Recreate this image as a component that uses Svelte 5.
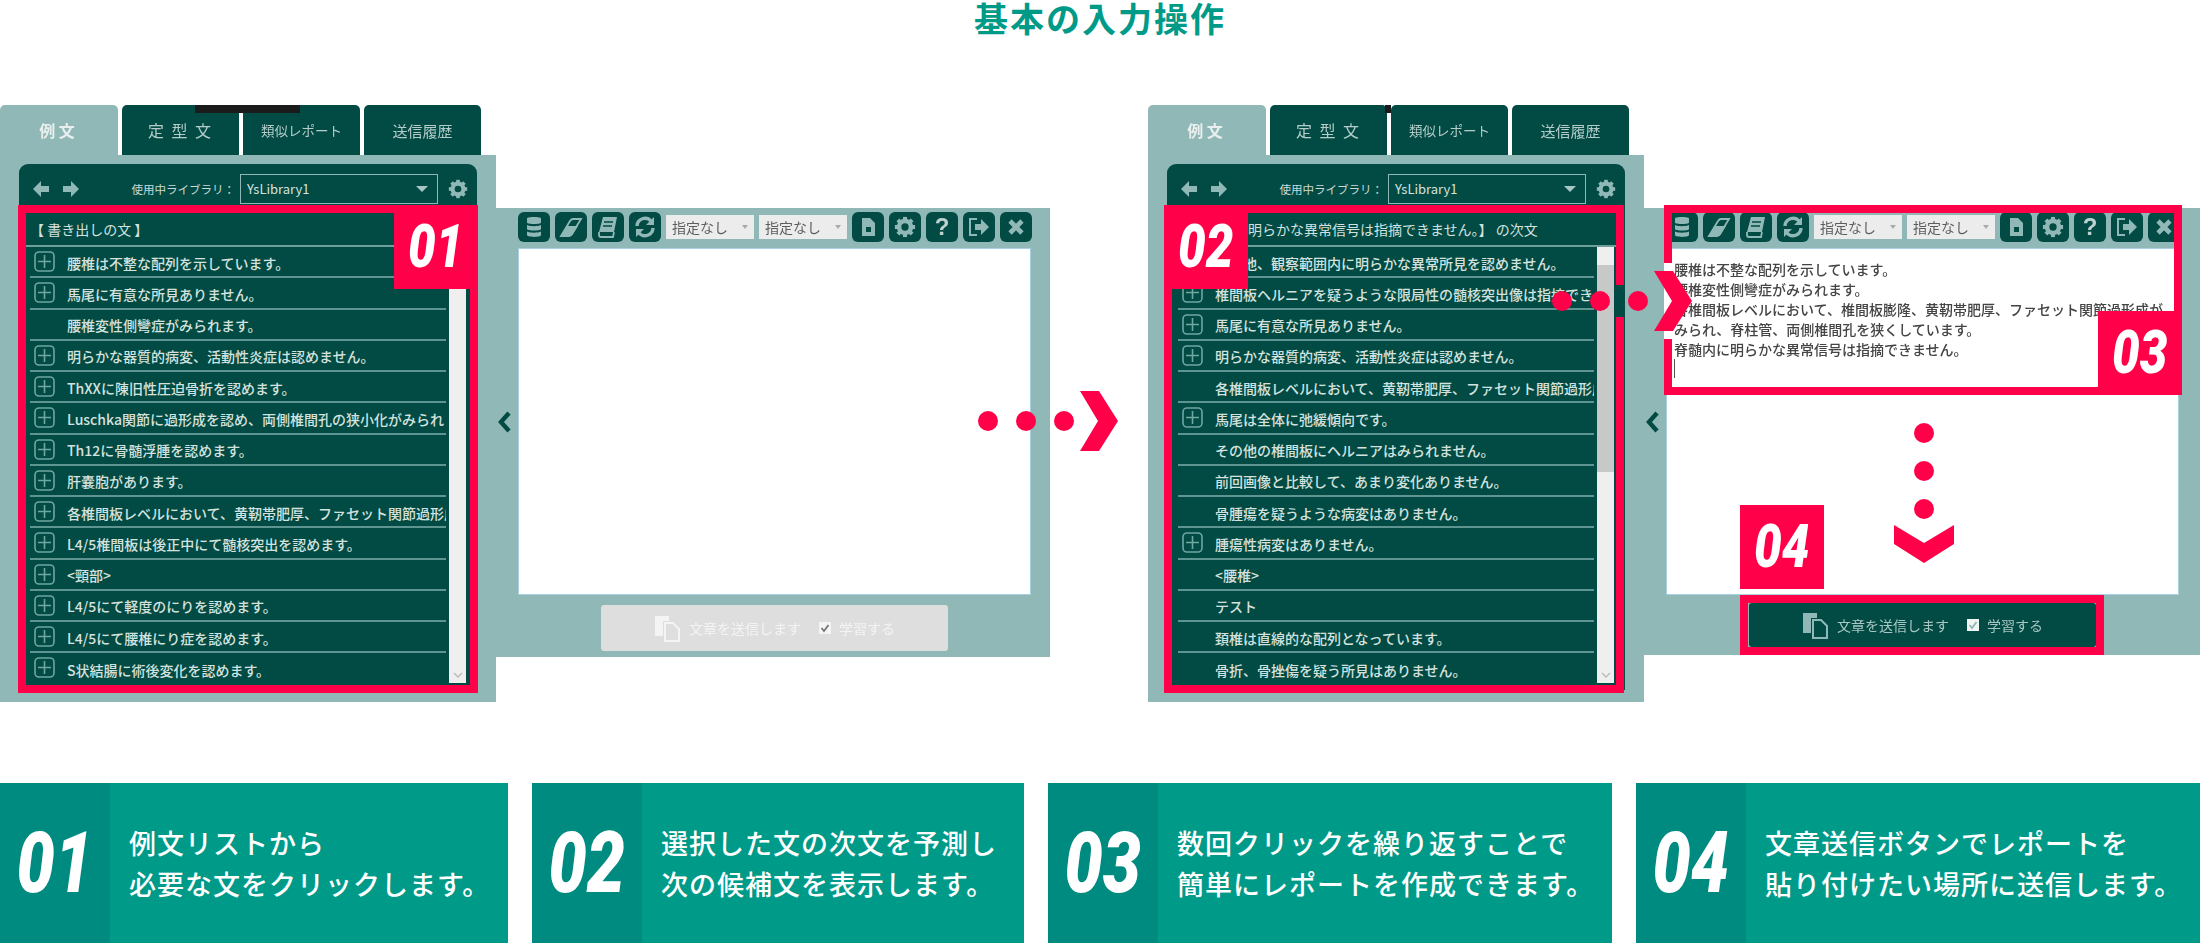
<script lang="ts">
	const firstRows = [
		{ text: '腰椎は不整な配列を示しています。', plus: true },
		{ text: '馬尾に有意な所見ありません。', plus: true },
		{ text: '腰椎変性側彎症がみられます。', plus: false },
		{ text: '明らかな器質的病変、活動性炎症は認めません。', plus: true },
		{ text: 'ThXXに陳旧性圧迫骨折を認めます。', plus: true },
		{ text: 'Luschka関節に過形成を認め、両側椎間孔の狭小化がみられます。', plus: true },
		{ text: 'Th12に骨髄浮腫を認めます。', plus: true },
		{ text: '肝嚢胞があります。', plus: true },
		{ text: '各椎間板レベルにおいて、黄靭帯肥厚、ファセット関節過形成がみられます。', plus: true },
		{ text: 'L4/5椎間板は後正中にて髄核突出を認めます。', plus: true },
		{ text: '<頸部>', plus: true },
		{ text: 'L4/5にて軽度のにりを認めます。', plus: true },
		{ text: 'L4/5にて腰椎にり症を認めます。', plus: true },
		{ text: 'S状結腸に術後変化を認めます。', plus: true }
	];

	const nextRows = [
		{ text: 'その他、観察範囲内に明らかな異常所見を認めません。', plus: false },
		{ text: '椎間板ヘルニアを疑うような限局性の髄核突出像は指摘できません。', plus: true },
		{ text: '馬尾に有意な所見ありません。', plus: true },
		{ text: '明らかな器質的病変、活動性炎症は認めません。', plus: true },
		{ text: '各椎間板レベルにおいて、黄靭帯肥厚、ファセット関節過形成がみられます。', plus: false },
		{ text: '馬尾は全体に弛緩傾向です。', plus: true },
		{ text: 'その他の椎間板にヘルニアはみられません。', plus: false },
		{ text: '前回画像と比較して、あまり変化ありません。', plus: false },
		{ text: '骨腫瘍を疑うような病変はありません。', plus: false },
		{ text: '腫瘍性病変はありません。', plus: true },
		{ text: '<腰椎>', plus: false },
		{ text: 'テスト', plus: false },
		{ text: '頚椎は直線的な配列となっています。', plus: false },
		{ text: '骨折、骨挫傷を疑う所見はありません。', plus: false }
	];

	const reportLines = [
		'腰椎は不整な配列を示しています。',
		'腰椎変性側彎症がみられます。',
		'各椎間板レベルにおいて、椎間板膨隆、黄靭帯肥厚、ファセット関節過形成が',
		'みられ、脊柱管、両側椎間孔を狭くしています。',
		'脊髄内に明らかな異常信号は指摘できません。'
	];

	const cards = [
		{ no: '01', lines: ['例文リストから', '必要な文をクリックします。'] },
		{ no: '02', lines: ['選択した文の次文を予測し', '次の候補文を表示します。'] },
		{ no: '03', lines: ['数回クリックを繰り返すことで', '簡単にレポートを作成できます。'] },
		{ no: '04', lines: ['文章送信ボタンでレポートを', '貼り付けたい場所に送信します。'] }
	];

	const teeth = [0, 45, 90, 135, 180, 225, 270, 315];
</script>

{#snippet gear(size)}
	<svg class="gear" width={size} height={size} viewBox="0 0 24 24">
		<circle cx="12" cy="12" r="6.5" fill="none" stroke="currentColor" stroke-width="5" />
		{#each teeth as angle}
			<rect x="9.8" y="1" width="4.4" height="5" fill="currentColor" transform="rotate({angle} 12 12)" />
		{/each}
	</svg>
{/snippet}

{#snippet library(rows, title, thumb, notch)}
	<div class="library">
		<div class="tabs">
			<div class="tab active">例 文</div>
			<div class="tab spaced">定 型 文</div>
			<div class="tab small">類似レポート</div>
			<div class="tab">送信履歴</div>
			<div class="tab-notch {notch}"></div>
		</div>
		<div class="library-body">
			<div class="library-panel">
				<div class="library-bar">
					<svg width="18" height="18" viewBox="0 0 18 18"><path d="M9 1 1 9l8 8 0-5h8V6H9z" fill="currentColor" /></svg>
					<svg width="18" height="18" viewBox="0 0 18 18"><path d="M9 1l8 8-8 8 0-5H1V6h8z" fill="currentColor" /></svg>
					<span class="library-label">使用中ライブラリ：</span>
					<div class="library-select">
						<span>YsLibrary1</span>
						<i class="caret"></i>
					</div>
					{@render gear(20)}
				</div>
				<div class="list-title">{title}</div>
				<div class="list">
					<div class="rows">
						{#each rows as row}
							<div class="row">
								{#if row.plus}
									<svg class="plus" width="21" height="21" viewBox="0 0 21 21">
										<rect x="1" y="1" width="19" height="19" rx="4" fill="none" stroke="currentColor" stroke-width="1.6" />
										<path d="M10.5 4v13M4 10.5h13" stroke="currentColor" stroke-width="1.6" />
									</svg>
								{/if}
								<span class="row-text">{row.text}</span>
							</div>
						{/each}
					</div>
					<div class="scrollbar">
						{#if thumb}<div class="scroll-up"></div><div class="thumb"></div>{/if}
						<svg class="scroll-down" width="10" height="6" viewBox="0 0 10 6"><path d="M1 1l4 4 4-4" fill="none" stroke="#bbb" stroke-width="1.4" /></svg>
					</div>
				</div>
			</div>
		</div>
	</div>
{/snippet}

{#snippet editor(lines, ready)}
	<div class="editor" class:ready>
		<div class="collapse">
			<svg width="15" height="22" viewBox="0 0 15 22"><path d="M12 2 4 11l8 9" fill="none" stroke="#024a44" stroke-width="4.4" /></svg>
		</div>
		<div class="editor-main">
			<div class="toolbar">
				<button class="tool" aria-label="ライブラリ">
					<svg width="20" height="24" viewBox="0 0 20 24"><path d="M3 3.5C3 1.500 17 1.500 17 3.500v4C17 9.500 3 9.500 3 7.500zM3 10c3 1.600 11 1.600 14 0v4c0 2-14 2-14 0zM3 16.500c3 1.600 11 1.600 14 0V20c0 2.500-14 2.500-14 0z" fill="currentColor" /></svg>
				</button>
				<button class="tool" aria-label="消去">
					<svg width="24" height="22" viewBox="0 0 24 22"><path d="M2 20 11 5c1-1.500 2-2 3-2h8l-9 15c-.6 1-1.500 2-3 2z" fill="none" stroke="currentColor" stroke-width="1.800" /><path d="M8 10h11l-5 8c-.6 1-1.500 2-3 2H2z" fill="currentColor" /></svg>
				</button>
				<button class="tool" aria-label="辞書">
					<svg width="24" height="24" viewBox="0 0 24 24"><path d="M7 2h14l-3 15H3z" fill="currentColor" /><path d="M3 17v3c0 1 .5 2 2 2h12l1-5" fill="none" stroke="currentColor" stroke-width="1.800" /><path d="M8 7h9M7 11h9" stroke="#024a44" stroke-width="1.500" /></svg>
				</button>
				<button class="tool" aria-label="更新">
					<svg width="24" height="24" viewBox="0 0 24 24"><path d="M4 11a8 8 0 0 1 14-5" fill="none" stroke="currentColor" stroke-width="3.400" /><path d="M21 2v8h-8z" fill="currentColor" /><path d="M20 13a8 8 0 0 1-14 5" fill="none" stroke="currentColor" stroke-width="3.400" /><path d="M3 22v-8h8z" fill="currentColor" /></svg>
				</button>
				<div class="picker"><span>指定なし</span><i class="caret grey"></i></div>
				<div class="picker"><span>指定なし</span><i class="caret grey"></i></div>
				<button class="tool" aria-label="文書">
					<svg width="18" height="20" viewBox="0 0 18 20"><path d="M3 1h8l5 5v13H3zM7 10v5h5v-5z" fill="currentColor" fill-rule="evenodd" /></svg>
				</button>
				<button class="tool" aria-label="設定">{@render gear(22)}</button>
				<button class="tool question">?</button>
				<button class="tool" aria-label="戻る">
					<svg width="24" height="22" viewBox="0 0 24 22"><path d="M10 3H3v16h7" fill="none" stroke="currentColor" stroke-width="2" /><path d="M8 8h6V3l8 8-8 8v-5H8z" fill="currentColor" /></svg>
				</button>
				<button class="tool" aria-label="閉じる">
					<svg width="18" height="18" viewBox="0 0 18 18"><path d="M3 3l12 12M15 3 3 15" stroke="currentColor" stroke-width="4.600" /></svg>
				</button>
			</div>
			<div class="report">
				{#each lines as line}
					<div>{line}</div>
				{/each}
				{#if lines.length}<div class="cursor"></div>{/if}
			</div>
			<div class="send">
				<svg width="27" height="27" viewBox="0 0 27 27"><path d="M1 1h14v5H9v15H1z" fill="currentColor" /><path d="M11 8h8l6 6v12H11z" fill="none" stroke="currentColor" stroke-width="2" /></svg>
				<span class="send-label">文章を送信します</span>
				<span class="check">
					<svg width="10" height="10" viewBox="0 0 10 10"><path d="M1.500 5l2.500 3 4.500-6" fill="none" stroke="currentColor" stroke-width="1.800" /></svg>
				</span>
				<span>学習する</span>
			</div>
		</div>
	</div>
{/snippet}

<main class="page">
	<h1 class="heading">基本の入力操作</h1>

	<section class="demo">
		<div class="shot">
			{@render library(firstRows, '【 書き出しの文 】', false, 'wide')}
			{@render editor([], false)}

			<div class="frame frame-01">
				<div class="badge badge-01"><span>01</span></div>
			</div>

			<div class="arrow arrow-01">
				<i class="dot"></i><i class="dot"></i><i class="dot"></i>
				<svg width="38" height="60" viewBox="0 0 38 60"><path d="M0 0h19l19 30-19 30H0l18-30z" fill="#ff0049" /></svg>
			</div>
		</div>

		<div class="shot shot-next">
			{@render library(nextRows, '【脊髄内に明らかな異常信号は指摘できません。】 の次文', true, 'thin')}
			{@render editor(reportLines, true)}

			<div class="frame frame-02">
				<div class="badge badge-02"><span>02</span></div>
				<div class="gap-02"></div>
			</div>
			<div class="frame frame-03">
				<div class="badge badge-03"><span>03</span></div>
				<div class="gap-03"></div>
			</div>
			<div class="frame frame-04">
				<div class="badge badge-04"><span>04</span></div>
			</div>

			<div class="arrow arrow-02">
				<i class="dot"></i><i class="dot"></i><i class="dot"></i>
				<svg width="38" height="60" viewBox="0 0 38 60"><path d="M0 0h19l19 30-19 30H0l18-30z" fill="#ff0049" /></svg>
			</div>
			<div class="arrow arrow-03">
				<i class="dot"></i><i class="dot"></i><i class="dot"></i>
				<svg width="60" height="38" viewBox="0 0 60 38"><path d="M0 0 30 18 60 0v19L30 38 0 19z" fill="#ff0049" /></svg>
			</div>
		</div>
	</section>

	<section class="cards">
		{#each cards as card}
			<article class="card">
				<div class="card-no"><span>{card.no}</span></div>
				<p class="card-text">
					{#each card.lines as line}
						<span>{line}</span>
					{/each}
				</p>
			</article>
		{/each}
	</section>
</main>

<style>
	:global(body) {
		margin: 0;
		background: #fff;
	}
	.page {
		width: 2200px;
		height: 943px;
		overflow: hidden;
		font-family: 'Noto Sans CJK JP', 'Liberation Sans', sans-serif;
	}
	.heading {
		height: 105px;
		margin: 0;
		text-align: center;
		font-size: 34px;
		line-height: 36px;
		letter-spacing: 2px;
		font-weight: 700;
		color: #009a89;
	}

	.demo {
		display: grid;
		grid-template-columns: 1148px 1052px;
		height: 678px;
	}
	.shot {
		position: relative;
		display: flex;
		align-items: flex-start;
		min-width: 0;
	}

	/* left side: the example list window */
	.library {
		width: 496px;
		flex: none;
		filter: blur(0.7px);
	}
	.tabs {
		position: relative;
		display: flex;
		gap: 4px;
		height: 50px;
		padding-right: 15px;
	}
	.tab {
		width: 117px;
		display: flex;
		align-items: center;
		justify-content: center;
		border-radius: 5px 5px 0 0;
		background: #024a44;
		color: #b4cdc9;
		font-size: 15px;
		white-space: pre;
	}
	.tab.small {
		font-size: 13.500px;
	}
	.tab.spaced {
		font-size: 16px;
		letter-spacing: 2px;
	}
	.tab.active {
		width: 118px;
		background: #8fb8b6;
		color: #e8efee;
		font-size: 16px;
		font-weight: 700;
		padding-right: 4px;
		box-sizing: border-box;
	}
	.tab-notch {
		position: absolute;
		top: 0;
		height: 8px;
		background: #1b1b1b;
	}
	.tab-notch.wide {
		left: 195px;
		width: 105px;
	}
	.tab-notch.thin {
		left: 237px;
		width: 6px;
	}
	.library-body {
		background: #8fb8b6;
		padding: 9px 19px 12px;
		height: 547px;
		box-sizing: border-box;
	}
	.library-panel {
		height: 526px;
		background: #024a44;
		border-radius: 9px 9px 0 0;
		color: #d4e2df;
		padding: 0 7px;
		box-sizing: border-box;
	}
	.library-bar {
		display: flex;
		align-items: center;
		height: 41px;
		padding: 8px 2px 0 6px;
		box-sizing: border-box;
		color: #8fb8b6;
		gap: 12px;
	}
	.library-label {
		flex: 1;
		text-align: right;
		font-size: 11.500px;
		color: #c8dbd8;
		margin-right: -7px;
		white-space: nowrap;
	}
	.library-select {
		width: 198px;
		height: 30px;
		border: 1px solid #8fb8b6;
		box-sizing: border-box;
		display: flex;
		align-items: center;
		justify-content: space-between;
		padding: 0 9px 0 6px;
		font-size: 13px;
		color: #d4e2df;
	}
	.caret {
		width: 0;
		height: 0;
		border-left: 6px solid transparent;
		border-right: 6px solid transparent;
		border-top: 6px solid #a9c8c5;
	}
	.caret.grey {
		border-left-width: 3px;
		border-right-width: 3px;
		border-top: 4px solid #aaa;
	}
	.gear {
		flex: none;
		margin-left: -2px;
	}
	.list-title {
		height: 34px;
		margin-top: 8px;
		padding: 0 4px;
		border-bottom: 2px solid #6d9f9b;
		box-sizing: border-box;
		display: flex;
		align-items: center;
		font-size: 14px;
		white-space: pre;
	}
	.list {
		display: flex;
	}
	.rows {
		width: 420px;
		padding-left: 4px;
		box-sizing: border-box;
		overflow: hidden;
	}
	.row {
		position: relative;
		height: 31.250px;
		box-sizing: border-box;
		border-bottom: 2px solid #5f9591;
		padding: 2px 0 0 37px;
		display: flex;
		align-items: center;
		font-size: 14px;
		font-weight: 500;
		white-space: nowrap;
	}
	.row:last-child {
		border-bottom: 0;
	}
	.row-text {
		flex: none;
	}
	.plus {
		position: absolute;
		left: 4px;
		top: 4px;
		color: #6fa7a1;
	}
	.scrollbar {
		position: relative;
		width: 17px;
		height: 436px;
		margin-left: 3px;
		background: #f0eeee;
	}
	.scroll-up {
		height: 18px;
	}
	.thumb {
		height: 207px;
		background: #c8c8c8;
	}
	.scroll-down {
		position: absolute;
		left: 4px;
		bottom: 5px;
	}

	/* right side: the report editor window */
	.editor {
		flex: none;
		width: 554px;
		height: 449px;
		margin-top: 103px;
		display: flex;
		background: #8fb8b6;
		padding: 4px 19px 0 0;
		box-sizing: border-box;
		filter: blur(0.7px);
	}
	.editor.ready {
		width: 556px;
		height: 447px;
		padding-right: 21px;
	}
	.collapse {
		width: 22px;
		flex: none;
		padding-top: 199px;
		box-sizing: border-box;
	}
	.collapse svg {
		display: block;
		margin-left: 1px;
	}
	.editor-main {
		flex: 1;
		min-width: 0;
		display: flex;
		flex-direction: column;
	}
	.toolbar {
		display: flex;
		gap: 5px;
		height: 30px;
		align-items: center;
	}
	.tool {
		width: 32px;
		height: 30px;
		flex: none;
		border: 0;
		padding: 0;
		border-radius: 6px;
		background: #024a44;
		color: #8fb8b6;
		display: flex;
		align-items: center;
		justify-content: center;
	}
	.tool svg {
		margin: 0;
	}
	.question {
		font-family: 'Liberation Sans', sans-serif;
		font-weight: 700;
		font-size: 24px;
		color: #bcd2cf;
	}
	.picker {
		width: 88px;
		height: 24px;
		flex: none;
		background: #ececec;
		color: #5d5d5d;
		font-size: 14px;
		display: flex;
		align-items: center;
		justify-content: space-between;
		padding: 0 6px;
		box-sizing: border-box;
	}
	.report {
		height: 347px;
		margin-top: 6px;
		background: #fff;
		border: 1px solid #a9d0e0;
		box-sizing: border-box;
		padding: 10px 7px;
		font-size: 14px;
		font-weight: 500;
		line-height: 20px;
		color: #444;
		white-space: nowrap;
		overflow: hidden;
	}
	.cursor {
		width: 1px;
		height: 19px;
		background: #555;
	}
	.send {
		width: 347px;
		height: 46px;
		margin: 10px auto 0;
		border-radius: 3px;
		background: #dedede;
		color: #f4f4f4;
		display: flex;
		align-items: center;
		justify-content: center;
		gap: 8px;
		font-size: 14px;
	}
	.send-label {
		margin-right: 10px;
	}
	.check {
		width: 12px;
		height: 12px;
		background: #f4f4f4;
		color: #777;
		display: flex;
		align-items: center;
		justify-content: center;
	}
	.editor.ready .send {
		height: 44px;
		margin-top: 8px;
		background: #024a44;
		color: #a9c7c3;
	}
	.editor.ready .send svg:first-child {
		color: #8fb8b6;
	}
	.editor.ready .check {
		background: #f0f4f3;
		color: #024a44;
	}

	/* red call-outs lying over the windows */
	.frame {
		position: absolute;
		border: 8px solid #ff0049;
		box-sizing: border-box;
	}
	.frame-01 {
		left: 18px;
		top: 100px;
		width: 460px;
		height: 488px;
	}
	.frame-02 {
		left: 16px;
		top: 100px;
		width: 460px;
		height: 488px;
	}
	.frame-03 {
		left: 516px;
		top: 100px;
		width: 518px;
		height: 190px;
	}
	.frame-04 {
		left: 592px;
		top: 490px;
		width: 364px;
		height: 60px;
	}
	.badge {
		position: absolute;
		width: 84px;
		height: 84px;
		background: #ff0049;
		color: #fff;
		display: flex;
		align-items: center;
		justify-content: center;
		font-family: Roboto, 'Liberation Sans', sans-serif;
		font-style: italic;
		font-weight: 900;
		font-size: 60px;
		line-height: 1;
	}
	.badge span {
		display: inline-block;
		transform: scaleX(0.82);
	}
	.badge-01 {
		top: -8px;
		right: -8px;
	}
	.badge-02 {
		top: -8px;
		left: -8px;
	}
	.badge-03 {
		right: -8px;
		bottom: -8px;
	}
	.badge-04 {
		left: -8px;
		top: -98px;
	}
	.gap-02 {
		position: absolute;
		right: -8px;
		top: 72px;
		width: 8px;
		height: 32px;
		background: #024a44;
	}
	.gap-03 {
		position: absolute;
		left: -8px;
		top: 50px;
		width: 8px;
		height: 76px;
		background: #fff;
	}

	.arrow {
		position: absolute;
		display: flex;
		align-items: center;
		gap: 18px;
	}
	.arrow svg {
		display: block;
		margin-left: -12px;
	}
	.dot {
		width: 20px;
		height: 20px;
		border-radius: 50%;
		background: #ff0049;
	}
	.arrow-01 {
		left: 978px;
		top: 286px;
	}
	.arrow-02 {
		left: 404px;
		top: 166px;
	}
	.arrow-03 {
		left: 746px;
		top: 318px;
		flex-direction: column;
	}
	.arrow-03 svg {
		margin: -12px 0 0;
	}

	/* step cards */
	.cards {
		display: grid;
		grid-template-columns: 508px 492px 564px 564px;
		gap: 24px;
		height: 160px;
	}
	.card {
		display: flex;
		background: #009a89;
		color: #fff;
	}
	.card-no {
		width: 110px;
		flex: none;
		background: #008b80;
		display: flex;
		align-items: center;
		justify-content: center;
		font-family: Roboto, 'Liberation Sans', sans-serif;
		font-style: italic;
		font-weight: 900;
		font-size: 85px;
	}
	.card-no span {
		display: inline-block;
		transform: scaleX(0.8);
	}
	.card-text {
		margin: 0;
		padding-left: 19px;
		display: flex;
		flex-direction: column;
		justify-content: center;
		font-size: 27px;
		line-height: 41px;
		letter-spacing: 1px;
		font-weight: 500;
		white-space: nowrap;
	}
</style>
